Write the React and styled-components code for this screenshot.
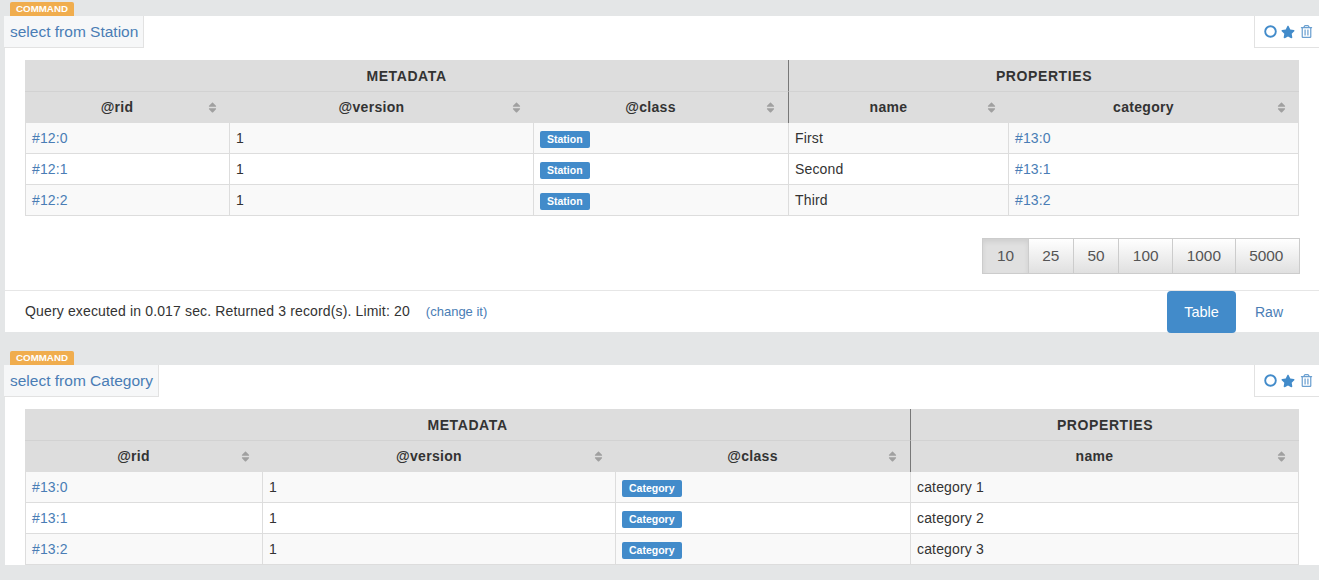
import React from "react";
import styled, { createGlobalStyle } from "styled-components";
import { FaSort, FaStar, FaRegTrashAlt } from "react-icons/fa";

const blue = "#428bca";
const link = "#4a7db5";

const stations = {
    query: "select from Station",
    columns: [205, 304, 255, 220, 290],
    metaSpan: 3,
    propNames: ["name", "category"],
    rows: [
        { rid: "#12:0", cls: "Station", values: ["First"], ref: "#13:0" },
        { rid: "#12:1", cls: "Station", values: ["Second"], ref: "#13:1" },
        { rid: "#12:2", cls: "Station", values: ["Third"], ref: "#13:2" },
    ],
};

const categories = {
    query: "select from Category",
    columns: [238, 353, 295, 388],
    metaSpan: 3,
    propNames: ["name"],
    rows: [
        { rid: "#13:0", cls: "Category", values: ["category 1"] },
        { rid: "#13:1", cls: "Category", values: ["category 2"] },
        { rid: "#13:2", cls: "Category", values: ["category 3"] },
    ],
};

export default function App() {
    return (
        <>
            <GlobalStyle />
            <Page>
                <Result data={stations} footer />
                <Result data={categories} />
            </Page>
        </>
    );
}

function Result({ data, footer }) {
    const { query, columns, metaSpan, propNames, rows } = data;
    return (
        <Block>
            <Badge>COMMAND</Badge>
            <Card>
                <CardTop>
                    <QueryTab>{query}</QueryTab>
                    <Actions>
                        <RingIcon />
                        <FaStar />
                        <TrashIcon><FaRegTrashAlt /></TrashIcon>
                    </Actions>
                </CardTop>
                <TableWrap>
                    <Table>
                        <colgroup>
                            {columns.map((w, i) => (
                                <Col key={i} $width={w} />
                            ))}
                        </colgroup>
                        <thead>
                            <tr>
                                <GroupHead colSpan={metaSpan} $divider>METADATA</GroupHead>
                                <GroupHead colSpan={propNames.length}>PROPERTIES</GroupHead>
                            </tr>
                            <tr>
                                <SortHead label="@rid" />
                                <SortHead label="@version" />
                                <SortHead label="@class" divider />
                                {propNames.map((name) => (
                                    <SortHead key={name} label={name} />
                                ))}
                            </tr>
                        </thead>
                        <tbody>
                            {rows.map((row, i) => (
                                <Row key={row.rid} $odd={i % 2 === 0}>
                                    <Cell><RecordLink>{row.rid}</RecordLink></Cell>
                                    <Cell>1</Cell>
                                    <Cell><ClassLabel>{row.cls}</ClassLabel></Cell>
                                    {row.values.map((v) => (
                                        <Cell key={v}>{v}</Cell>
                                    ))}
                                    {row.ref && <Cell><RecordLink>{row.ref}</RecordLink></Cell>}
                                </Row>
                            ))}
                        </tbody>
                    </Table>
                </TableWrap>
                {footer && (
                    <>
                        <Pager>
                            {["10", "25", "50", "100", "1000", "5000"].map((n, i) => (
                                <PageButton key={n} $active={i === 0}>{n}</PageButton>
                            ))}
                        </Pager>
                        <Footer>
                            <Summary>
                                Query executed in 0.017 sec. Returned 3 record(s). Limit: 20
                                <ChangeLink>(change it)</ChangeLink>
                            </Summary>
                            <Views>
                                <TableTab>Table</TableTab>
                                <RawTab>Raw</RawTab>
                            </Views>
                        </Footer>
                    </>
                )}
            </Card>
        </Block>
    );
}

function SortHead({ label, divider }) {
    return (
        <ColumnHead $divider={divider}>
            {label}
            <SortIcon><FaSort /></SortIcon>
        </ColumnHead>
    );
}

function RingIcon() {
    return (
        <svg width="13" height="13" viewBox="0 0 13 13">
            <circle cx="6.5" cy="6.5" r="5.3" fill="none" stroke={blue} strokeWidth="1.9" />
        </svg>
    );
}

const GlobalStyle = createGlobalStyle`
    * {
        box-sizing: border-box;
    }
    html, body {
        margin: 0;
        padding: 0;
        height: 100%;
        overflow: hidden;
        background-color: #e4e6e7;
    }
    body {
        font-family: "Liberation Sans", Arial, sans-serif;
        font-size: 14px;
        color: #333333;
    }
`

const Page = styled.div`
    display: flex;
    flex-direction: column;
    height: 580px;
    overflow: hidden;
    padding-top: 2px;
`

const Block = styled.section`
    display: flex;
    flex-direction: column;
    align-items: flex-start;
    padding-left: 5px;
    margin-bottom: 19px;
`

const Badge = styled.div`
    height: 14px;
    margin-left: 5px;
    padding: 0 6px;
    background-color: #f0ad4e;
    border-radius: 2px 2px 0 0;
    color: #ffffff;
    font-size: 9.75px;
    font-weight: 700;
    line-height: 14px;
`

const Card = styled.div`
    width: 100%;
    display: flex;
    flex-direction: column;
    background-color: #ffffff;
`

const CardTop = styled.div`
    height: 31px;
    display: flex;
    justify-content: space-between;
    margin-left: -1px;
`

const QueryTab = styled.div`
    padding: 0 5px 0 6px;
    height: 32px;
    display: flex;
    align-items: center;
    background-color: #f6f7f8;
    border-right: 1px solid #e2e2e2;
    border-bottom: 1px solid #e2e2e2;
    color: ${link};
    font-size: 15.5px;
`

const Actions = styled.div`
    width: 65px;
    height: 32px;
    display: flex;
    align-items: center;
    gap: 4px;
    padding-left: 9px;
    border-left: 1px solid #e2e2e2;
    border-bottom: 1px solid #e2e2e2;
    color: ${blue};
    font-size: 14px;
`

const TrashIcon = styled.span`
    display: flex;
    margin-left: 1px;
    color: #6a9fd0;
    font-size: 13px;
`

const TableWrap = styled.div`
    margin: 13px 20px 0 20px;
`

const Table = styled.table`
    width: 100%;
    table-layout: fixed;
    border-collapse: separate;
    border-spacing: 0;
`

const Col = styled.col`
    width: ${(props) => props.$width}px;
`

const GroupHead = styled.th`
    height: 32px;
    padding: 0;
    background-color: #dddddd;
    border-bottom: 1px solid #d2d2d2;
    border-right: ${(props) => (props.$divider ? "1px solid #777777" : "none")};
    color: #333333;
    font-size: 14px;
    font-weight: 700;
    letter-spacing: 0.6px;
    text-align: center;
`

const ColumnHead = styled.th`
    position: relative;
    height: 31px;
    padding: 0 21px 2px 0;
    background-color: #dddddd;
    border-right: ${(props) => (props.$divider ? "1px solid #777777" : "none")};
    color: #333333;
    font-size: 14px;
    font-weight: 700;
    letter-spacing: 0.3px;
    text-align: center;
`

const SortIcon = styled.span`
    position: absolute;
    top: 9px;
    right: 11px;
    color: #a0a0a0;
    font-size: 13px;
    line-height: 13px;
`

const Row = styled.tr`
    background-color: ${(props) => (props.$odd ? "#f9f9f9" : "#ffffff")};
`

const Cell = styled.td`
    height: 31px;
    padding: 0 6px;
    border-right: 1px solid #dddddd;
    border-bottom: 1px solid #dddddd;
    color: #333333;
    font-size: 14px;
    letter-spacing: 0.15px;
    line-height: 20px;

    &:first-child {
        border-left: 1px solid #dddddd;
    }
`

const RecordLink = styled.a`
    color: ${link};
`

const ClassLabel = styled.span`
    display: inline-block;
    height: 17px;
    padding: 0 7px;
    background-color: ${blue};
    border-radius: 2px;
    color: #ffffff;
    font-size: 10.5px;
    font-weight: 700;
    letter-spacing: 0;
    line-height: 17px;
    vertical-align: middle;
`

const Pager = styled.div`
    align-self: flex-end;
    display: flex;
    height: 36px;
    margin: 22px 19px 16px 0;
    border: 1px solid #cccccc;
`

const PageButton = styled.div`
    padding: 0 13.6px;
    display: flex;
    align-items: center;
    border-left: ${(props) => (props.$active ? "none" : "1px solid #cccccc")};
    background: ${(props) =>
        props.$active
            ? "#e0e0e0"
            : "linear-gradient(to bottom, #ffffff, #e0e0e0)"};
    box-shadow: ${(props) => (props.$active ? "inset 0 3px 5px rgba(0, 0, 0, 0.08)" : "none")};
    color: #555555;
    font-size: 15.4px;

    &:last-child {
        padding-right: 15.6px;
    }
`

const Footer = styled.div`
    height: 42px;
    display: flex;
    align-items: flex-start;
    justify-content: space-between;
    border-top: 1px solid #e6e6e6;
    padding-left: 20px;
`

const Summary = styled.div`
    height: 40px;
    display: flex;
    align-items: center;
    color: #333333;
    font-size: 14px;
    letter-spacing: 0.15px;
`

const ChangeLink = styled.a`
    margin-left: 16px;
    color: ${link};
    font-size: 13px;
    letter-spacing: 0;
`

const Views = styled.div`
    display: flex;
    margin-right: 17px;
`

const TableTab = styled.div`
    width: 69px;
    height: 42px;
    display: flex;
    align-items: center;
    justify-content: center;
    background-color: ${blue};
    border-radius: 4px;
    color: #ffffff;
    font-size: 14.5px;
`

const RawTab = styled.div`
    width: 66px;
    height: 42px;
    display: flex;
    align-items: center;
    justify-content: center;
    color: ${link};
    font-size: 14px;
`
